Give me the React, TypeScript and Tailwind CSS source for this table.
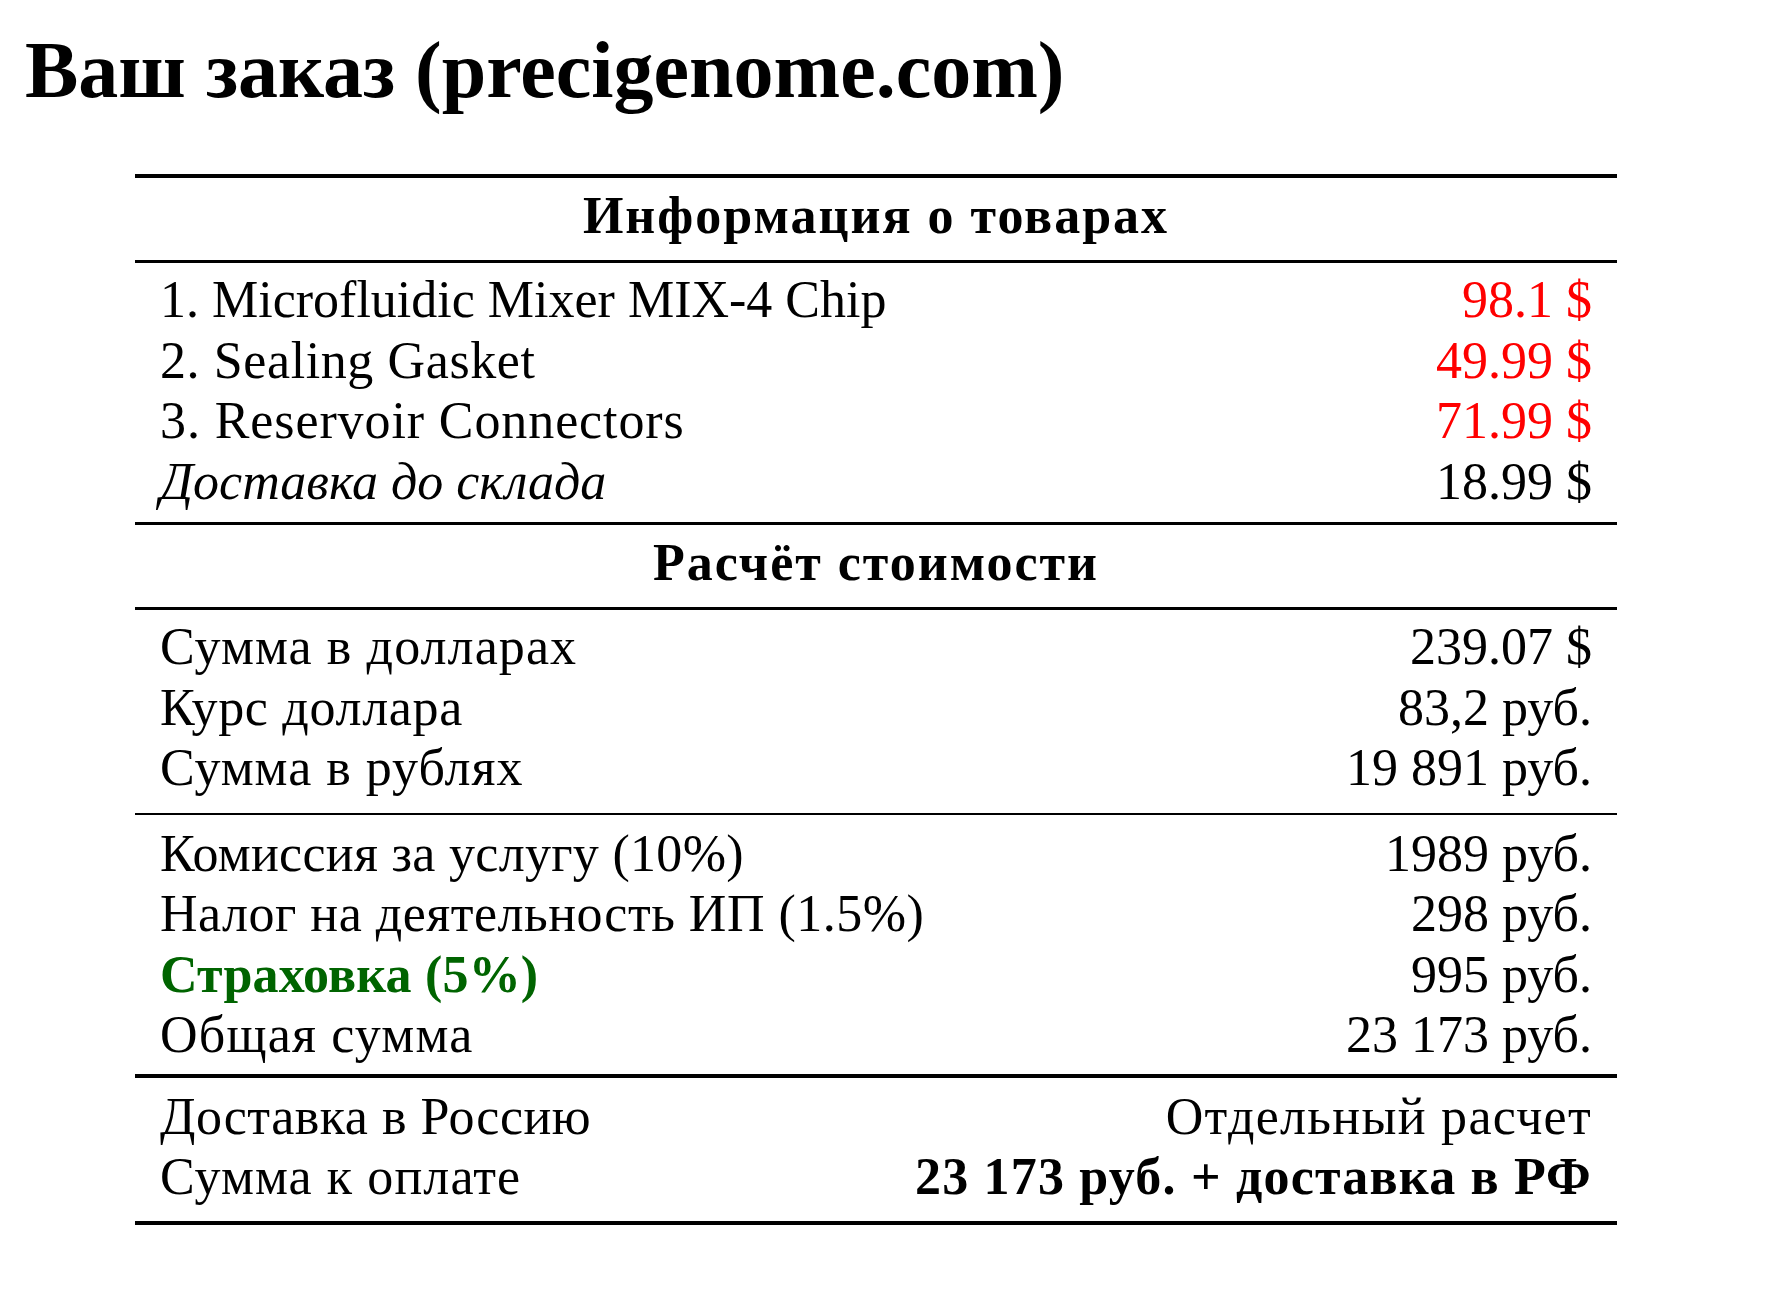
import React from 'react';

type Row = {
  label: string;
  value: string;
  labelClass?: string;
  valueClass?: string;
};

const items: Row[] = [
  { label: '1. Microfluidic Mixer MIX-4 Chip', value: '98.1 $', valueClass: 'text-[#ff0000]' },
  { label: '2. Sealing Gasket', value: '49.99 $', labelClass: 'tracking-[0.6px]', valueClass: 'text-[#ff0000]' },
  { label: '3. Reservoir Connectors', value: '71.99 $', labelClass: 'tracking-[0.9px]', valueClass: 'text-[#ff0000]' },
  { label: 'Доставка до склада', value: '18.99 $', labelClass: 'italic' },
];

const totals: Row[] = [
  { label: 'Сумма в долларах', value: '239.07 $', labelClass: 'tracking-[1.1px]' },
  { label: 'Курс доллара', value: '83,2 руб.', labelClass: 'tracking-[0.7px]' },
  { label: 'Сумма в рублях', value: '19 891 руб.', labelClass: 'tracking-[1px]' },
];

const fees: Row[] = [
  { label: 'Комиссия за услугу (10%)', value: '1989 руб.', labelClass: 'tracking-[0.3px]' },
  { label: 'Налог на деятельность ИП (1.5%)', value: '298 руб.', labelClass: 'tracking-[0.5px]' },
  { label: 'Страховка (5%)', value: '995 руб.', labelClass: 'font-bold text-[#006400] tracking-[0.2px]' },
  { label: 'Общая сумма', value: '23 173 руб.', labelClass: 'tracking-[1.2px]' },
];

const payment: Row[] = [
  { label: 'Доставка в Россию', value: 'Отдельный расчет', labelClass: 'tracking-[0.5px]', valueClass: 'tracking-[1.3px]' },
  {
    label: 'Сумма к оплате',
    value: '23 173 руб. + доставка в РФ',
    labelClass: 'tracking-[1.1px]',
    valueClass: 'font-bold tracking-[1.2px]',
  },
];

function Rows({ rows, className }: { rows: Row[]; className: string }) {
  return (
    <div className={className}>
      {rows.map((r) => (
        <div key={r.label} className="flex justify-between px-[25px] leading-[60.5px]">
          <span className={r.labelClass}>{r.label}</span>
          <span className={r.valueClass}>{r.value}</span>
        </div>
      ))}
    </div>
  );
}

function Heading({ children }: { children: React.ReactNode }) {
  return (
    <div className="pt-[8px] pb-[14px] text-center font-bold leading-[60px] tracking-[2px]">{children}</div>
  );
}

export default function App() {
  return (
    <div className="min-h-screen bg-white font-['Liberation_Serif',serif] text-black">
      <h1 className="pt-[30px] pl-[25px] text-[80px] font-bold leading-none">Ваш заказ (precigenome.com)</h1>

      <div className="mt-[64px] ml-[135px] w-[1482px] text-[52px]">
        <div className="h-[4px] bg-black" />
        <Heading>Информация о товарах</Heading>
        <div className="h-[3px] bg-black" />
        <Rows rows={items} className="pt-[7px] pb-[10px]" />
        <div className="h-[3px] bg-black" />
        <Heading>Расчёт стоимости</Heading>
        <div className="h-[3px] bg-black" />
        <Rows rows={totals} className="pt-[7px] pb-[14px]" />
        <div className="h-[2px] bg-black" />
        <Rows rows={fees} className="pt-[9px] pb-[8px]" />
        <div className="h-[4px] bg-black" />
        <Rows rows={payment} className="pt-[9px] pb-[13px]" />
        <div className="h-[4px] bg-black" />
      </div>
    </div>
  );
}
